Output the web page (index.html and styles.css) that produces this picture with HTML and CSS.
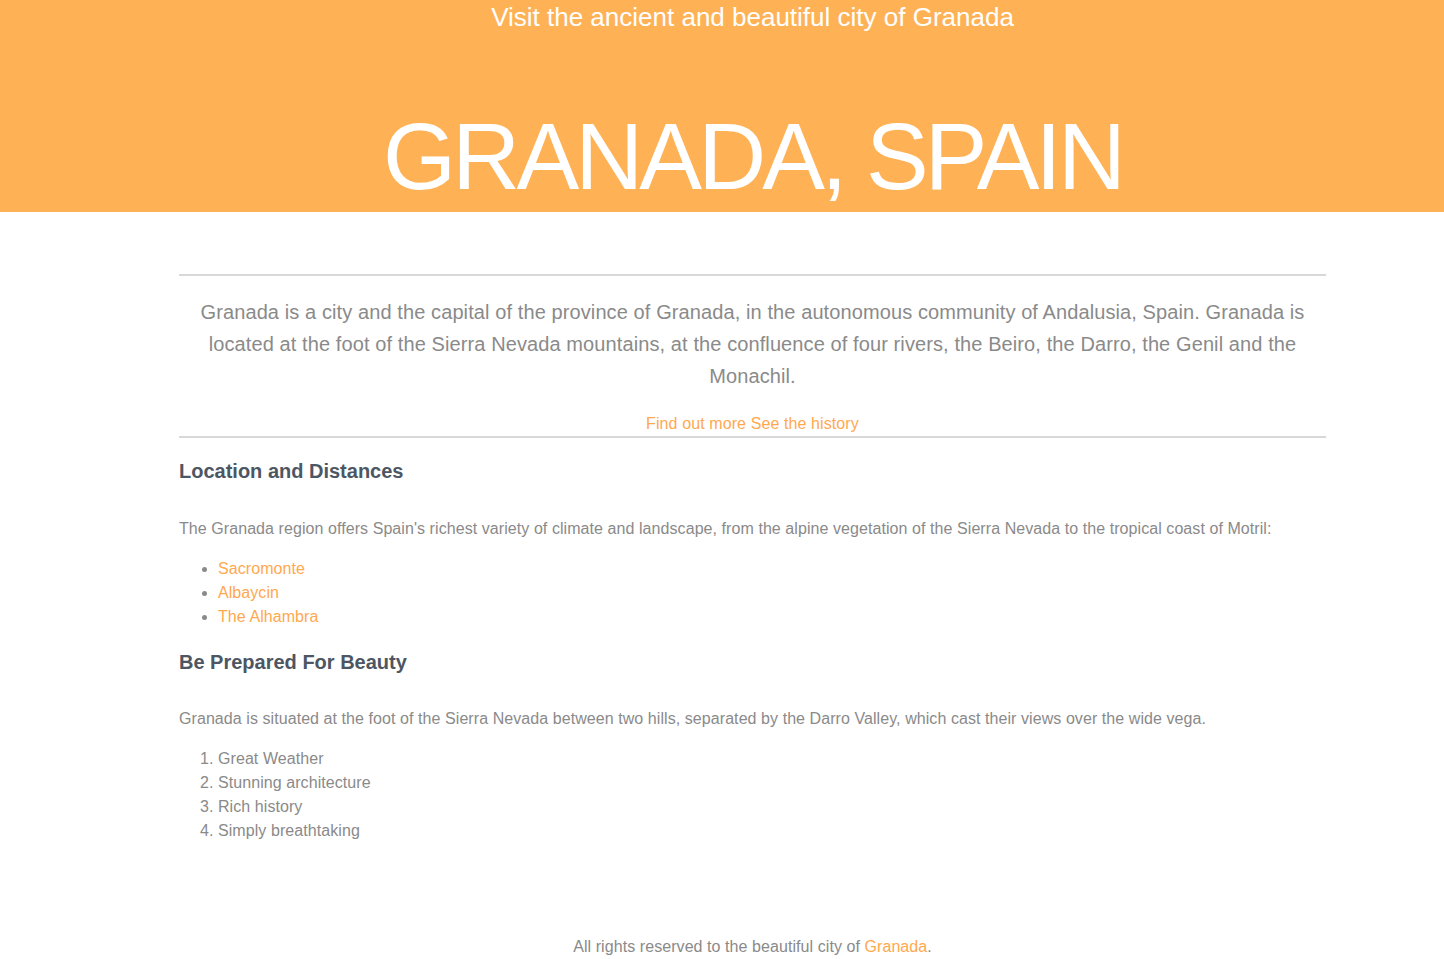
FILE: index.html
```html
<!DOCTYPE html>
<html lang="en">
<head>
<meta charset="utf-8">
<title>Granada, Spain</title>
<link rel="stylesheet" href="styles.css">
</head>
<body>
<header class="hero">
  <h2 class="hero-sub">Visit the ancient and beautiful city of Granada</h2>
  <h1 class="hero-title">GRANADA, SPAIN</h1>
</header>
<main class="content">
  <hr class="rule rule-top">
  <p class="intro">Granada is a city and the capital of the province of Granada, in the autonomous community of Andalusia, Spain. Granada is located at the foot of the Sierra Nevada mountains, at the confluence of four rivers, the Beiro, the Darro, the Genil and the Monachil.</p>
  <p class="links"><a href="#">Find out more</a> <a href="#">See the history</a></p>
  <hr class="rule">
  <h3 class="section-title">Location and Distances</h3>
  <p class="text">The Granada region offers Spain's richest variety of climate and landscape, from the alpine vegetation of the Sierra Nevada to the tropical coast of Motril:</p>
  <ul class="list">
    <li><a href="#">Sacromonte</a></li>
    <li><a href="#">Albaycin</a></li>
    <li><a href="#">The Alhambra</a></li>
  </ul>
  <h3 class="section-title">Be Prepared For Beauty</h3>
  <p class="text">Granada is situated at the foot of the Sierra Nevada between two hills, separated by the Darro Valley, which cast their views over the wide vega.</p>
  <ol class="list">
    <li>Great Weather</li>
    <li>Stunning architecture</li>
    <li>Rich history</li>
    <li>Simply breathtaking</li>
  </ol>
</main>
<footer class="footer">All rights reserved to the beautiful city of <a href="#">Granada</a>.</footer>
</body>
</html>
```
FILE: styles.css
```css
html, body {
  margin: 0;
  padding: 0;
  background: #ffffff;
}
body {
  font-family: "Liberation Sans", Arial, Helvetica, sans-serif;
  color: #8a8a8a;
  font-size: 16px;
  line-height: 24px;
  letter-spacing: 0.07px;
}
a {
  color: #ffa84f;
  text-decoration: none;
}
.hero {
  background: #ffb255;
  color: #ffffff;
  text-align: center;
  padding: 0 118px 7px 179px;
}
.hero-sub {
  margin: 0;
  font-size: 26px;
  line-height: 34px;
  font-weight: normal;
  letter-spacing: 0;
}
.hero-title {
  margin: 75px 0 0;
  font-size: 94px;
  line-height: 96px;
  font-weight: normal;
  letter-spacing: -3.8px;
}
.content {
  margin: 0 118px 0 179px;
  padding-top: 62px;
}
.rule {
  border: 0;
  height: 2px;
  background: #d8d8d8;
  margin: 0;
}
.intro {
  margin: 20px 0 0;
  padding: 0 20px;
  font-size: 20px;
  line-height: 32px;
  text-align: center;
  letter-spacing: 0.1px;
}
.links {
  margin: 20px 0 0;
  text-align: center;
  font-size: 16px;
  line-height: 24px;
  height: 24px;
  letter-spacing: 0.1px;
}
.section-title {
  margin: 21px 0 0;
  font-size: 20px;
  line-height: 24px;
  color: #4d5663;
  font-weight: bold;
  letter-spacing: 0;
}
.text {
  margin: 33.5px 0 0;
}
.list {
  margin: 16px 0 0;
  padding-left: 39px;
}
.footer {
  text-align: center;
  margin: 91.5px 0 0;
  padding: 0 118px 0 179px;
  line-height: 24px;
}
```
